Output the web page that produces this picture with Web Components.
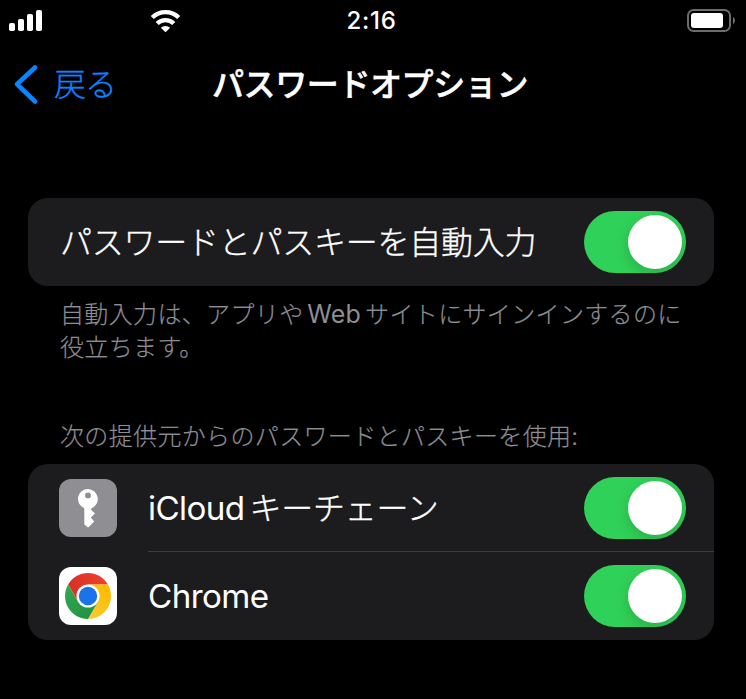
<!DOCTYPE html>
<html lang="ja">
<head>
<meta charset="utf-8">
<title>パスワードオプション</title>
<style>
html,body{margin:0;background:#000}
body{width:746px;height:699px;overflow:hidden;color:#fff;font-family:Inter,"Noto Sans CJK JP",sans-serif}
</style>
</head>
<body>
<settings-screen></settings-screen>
<script>
function define(name, html) {
  const t = document.createElement('template');
  t.innerHTML = html;
  customElements.define(name, class extends HTMLElement {
    constructor() {
      super();
      this.attachShadow({mode: 'open'}).append(t.content.cloneNode(true));
    }
  });
}

define('status-bar', `
<style>
:host{display:grid;grid-template-columns:1fr auto 1fr;height:40px;align-items:center}
svg{display:block}
.left{display:flex}
.battery{justify-self:end}
time{font:500 24px/40px Inter,sans-serif;letter-spacing:.7px;width:52px;text-align:center;white-space:nowrap;padding-top:1px;margin-right:3px}
</style>
<div class="left"><svg width="190" height="40" fill="#fff">
<rect x="9" y="22" width="6" height="8" rx="1.8"/><rect x="18" y="18" width="6" height="12" rx="1.8"/><rect x="27" y="13" width="6" height="17" rx="1.8"/><rect x="36" y="9" width="6" height="21" rx="1.8"/>
<g fill="none" stroke="#fff" stroke-width="4.4"><path d="M152.3 16.5a19 19 0 0 1 26.4 0"/><path d="M157.2 22.5a11.9 11.9 0 0 1 16.6 0"/></g>
<path d="M160.8 26.7a7 7 0 0 1 9.4 0l-4.7 4.5z"/></svg></div>
<time>2:16</time>
<svg class="battery" width="60" height="40"><rect x="2" y="9" width="42" height="21" rx="5.5" fill="none" stroke="#6c6c6c" stroke-width="2"/><rect x="5" y="12" width="32" height="15" rx="3" fill="#fff"/><path d="M47 16c2.4 1 2.4 6 0 7z" fill="#777"/></svg>`);

define('nav-bar', `
<style>
:host{display:grid;grid-template-columns:200px 1fr 206px;height:88px;align-items:center}
.back{display:flex;align-items:center;color:#0a84ff;font-size:32px;line-height:46px;font-weight:300;letter-spacing:-1px;-webkit-text-stroke:.3px}
.back slot{display:block;padding-top:2px}
svg{display:block;flex:none}
h1{margin:0;padding-top:2px;font-size:32px;line-height:46px;font-weight:500;letter-spacing:-.4px;text-align:center;white-space:nowrap;-webkit-text-stroke:.5px}
</style>
<div class="back"><svg width="54" height="46"><path d="M35 6.5 17 23.2 35 40.5" fill="none" stroke="#0a84ff" stroke-width="4.6" stroke-linecap="round" stroke-linejoin="round"/></svg><slot name="back"></slot></div>
<h1><slot></slot></h1>`);

define('toggle-switch', `
<style>
:host{display:flex;justify-content:flex-end;box-sizing:border-box;width:102px;height:62px;padding:4px;border-radius:31px;background:#30d158;overflow:hidden;flex:none}
i{width:54px;height:54px;border-radius:50%;background:#fff;box-shadow:0 5px 14px rgba(0,0,0,.17)}
</style><i></i>`);

define('settings-card', `
<style>:host{display:block;margin:0 32px 0 28px;border-radius:20px;background:#1c1c1e;overflow:hidden}</style><slot></slot>`);

define('settings-row', `
<style>
:host{display:flex;height:88px;padding-left:32px}
::slotted([slot=icon]){align-self:center;margin:0 31px 0 -1px}
.body{flex:1;display:flex;align-items:center;justify-content:space-between;padding-right:28px;box-sizing:border-box;border-bottom:1px solid transparent;padding-top:1px}
:host([divided]) .body{border-bottom-color:#3d3d41}
.label{padding-top:1px;font-size:32px;line-height:46px;font-weight:300;white-space:nowrap;letter-spacing:-.25px;-webkit-text-stroke:.35px}
</style>
<slot name="icon"></slot><div class="body"><span class="label"><slot></slot></span><toggle-switch></toggle-switch></div>`);

define('latin-text', `
<style>:host{font-family:Inter,sans-serif;font-weight:400;font-size:var(--size,33.2px);letter-spacing:var(--latin-track,-.6px);margin-right:var(--gap,0);margin-left:var(--lead,0);-webkit-text-stroke:0}</style><slot></slot>`);

define('settings-note', `
<style>:host{display:block;padding:0 32px 0 60px;color:#8d8d93;font-size:24px;line-height:33px;font-weight:300;letter-spacing:.35px;white-space:nowrap;-webkit-text-stroke:.2px}</style><slot></slot>`);

define('key-icon', `
<style>:host{display:block;width:58px;height:58px;flex:none}svg{display:block}</style>
<svg width="58" height="58"><rect width="58" height="58" rx="12" fill="#8e8e93"/><path fill="#fff" fill-rule="evenodd" d="M29 10a10 10 0 0 1 3.2 19.4V31L36 34.5 31.8 38.5 35.2 42.5 29.8 48Q29 48.7 28.2 48L25.3 45.2V29.3A10 10 0 0 1 29 10ZM29 13.5a2.9 2.9 0 1 0 0 5.8 2.9 2.9 0 0 0 0-5.8Z"/></svg>`);

define('chrome-icon', `
<style>:host{display:block;width:58px;height:58px;flex:none}svg{display:block}</style>
<svg width="58" height="58" viewBox="-29 -29 58 58">
<defs><linearGradient id="r"><stop stop-color="#d93025"/><stop offset="1" stop-color="#ea4335"/></linearGradient>
<linearGradient id="g" x1="0" y1="0" x2="1" y2="1"><stop stop-color="#34a853"/><stop offset="1" stop-color="#1e8e3e"/></linearGradient>
<linearGradient id="y" x1="0" y1="1" x2=".6" y2="0"><stop stop-color="#fcc934"/><stop offset="1" stop-color="#fbbc04"/></linearGradient></defs>
<rect x="-29" y="-29" width="58" height="58" rx="12" fill="#fff"/>
<path fill="url(#r)" d="M-19.9-11.5A23 23 0 0 1 19.9-11.5L0-11.5V0L-9.96 5.75Z"/>
<path fill="url(#y)" d="M19.9-11.5A23 23 0 0 1 0 23L9.96 5.75 0 0V-11.5Z"/>
<path fill="url(#g)" d="M0 23A23 23 0 0 1-19.9-11.5L-9.96 5.75 0 0 9.96 5.75Z"/>
<circle r="11.5" fill="#fff"/><circle r="9.2" fill="#1a73e8"/></svg>`);

define('settings-screen', `
<style>
:host{display:block;width:746px;height:699px;background:#000;overflow:hidden}
nav-bar{margin-bottom:70px}
.help{padding-top:12px;height:122px}
.head{height:44px}
.web{--size:25px;--lead:-3.5px;--gap:4px;--latin-track:.2px}
.icloud{--gap:5px}
</style>
<status-bar></status-bar>
<nav-bar><span slot="back">戻る</span>パスワードオプション</nav-bar>
<settings-card><settings-row>パスワードとパスキーを自動入力</settings-row></settings-card>
<settings-note class="help">自動入力は、アプリや<latin-text class="web">Web</latin-text>サイトにサインインするのに<br>役立ちます。</settings-note>
<settings-note class="head">次の提供元からのパスワードとパスキーを使用:</settings-note>
<settings-card>
<settings-row divided><key-icon slot="icon"></key-icon><latin-text class="icloud">iCloud</latin-text>キーチェーン</settings-row>
<settings-row><chrome-icon slot="icon"></chrome-icon><latin-text>Chrome</latin-text></settings-row>
</settings-card>`);
</script>
</body>
</html>
